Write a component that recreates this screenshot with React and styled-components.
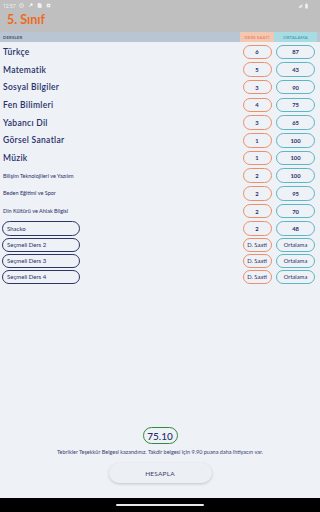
import React from "react";
import styled, { createGlobalStyle } from "styled-components";

const Global = createGlobalStyle`
  html, body { margin: 0; padding: 0; }
  body { background: #eef1f5; font-family: "Lato", "Noto Sans", sans-serif; }
`;

const Page = styled.div`
  width: 320px;
  height: 512px;
  display: flex;
  flex-direction: column;
  background: #eef1f5;
  overflow: hidden;
`;

const TopBar = styled.div`
  background: #bfbfbf;
  height: 32px;
  display: flex;
  flex-direction: column;
`;

const StatusBar = styled.div`
  height: 11px;
  display: flex;
  align-items: center;
  padding: 0 3px;
  gap: 4px;
  color: #f2f2f2;
  font-size: 5px;
  font-family: "Roboto", sans-serif;
`;

const StatusRight = styled.div`
  margin-left: auto;
  display: flex;
  align-items: center;
  gap: 2px;
  padding-right: 9px;
`;

const Title = styled.div`
  color: #ee6a1e;
  font-size: 12.5px;
  font-weight: 700;
  padding-left: 7px;
  line-height: 17px;
`;

const cols = "1fr 34px 43px 3px";

const HeaderRow = styled.div`
  height: 10px;
  background: #b9c5d3;
  display: grid;
  grid-template-columns: ${cols};
  font-size: 4.3px;
  font-weight: 700;
  align-items: stretch;
`;

const HeaderCell = styled.div`
  display: flex;
  align-items: center;
  justify-content: ${(p) => (p.$center ? "center" : "flex-start")};
  padding-left: ${(p) => (p.$center ? "0" : "3px")};
  background: ${(p) => p.$bg || "transparent"};
  color: ${(p) => p.$color || "#4a5570"};
  letter-spacing: 0.15px;
`;

const List = styled.div`
  padding-top: 1px;
  display: flex;
  flex-direction: column;
`;

const Row = styled.div`
  height: ${(p) => p.$h}px;
  display: grid;
  grid-template-columns: ${cols};
  align-items: center;
`;

const Lesson = styled.div`
  padding-left: 3px;
  color: #27306a;
  font-size: ${(p) => (p.$small ? "5.5px" : "8.5px")};
  font-weight: ${(p) => (p.$small ? 400 : 600)};
  letter-spacing: ${(p) => (p.$small ? "0" : "0.3px")};
  white-space: nowrap;
`;

const LessonBox = styled.div`
  margin-left: 2px;
  width: 78px;
  height: 14.5px;
  box-sizing: border-box;
  border: 1px solid #2d3566;
  border-radius: 8px;
  display: flex;
  align-items: center;
  padding-left: 4px;
  color: #27306a;
  font-size: 6px;
  white-space: nowrap;
`;

const PillCell = styled.div`
  display: flex;
  justify-content: center;
`;

const Pill = styled.div`
  width: ${(p) => p.$w}px;
  height: 14.5px;
  box-sizing: border-box;
  border: 1px solid ${(p) => p.$border};
  border-radius: 8px;
  display: flex;
  align-items: center;
  justify-content: center;
  color: #27306a;
  font-size: 5.8px;
  font-weight: ${(p) => (p.$bold ? 700 : 400)};
  background: #eef1f5;
`;

const Spacer = styled.div`
  flex: 1;
`;

const Footer = styled.div`
  display: flex;
  flex-direction: column;
  align-items: center;
  padding-bottom: 15px;
`;

const Score = styled.div`
  width: 35px;
  height: 17px;
  box-sizing: border-box;
  border: 1.3px solid #2e8a3c;
  border-radius: 9px;
  display: flex;
  align-items: center;
  justify-content: center;
  color: #27306a;
  font-size: 10px;
  font-weight: 500;
`;

const Message = styled.div`
  margin-top: 5px;
  color: #3a4270;
  font-size: 5.5px;
  white-space: nowrap;
`;

const Button = styled.button`
  margin-top: 8px;
  width: 103px;
  height: 20px;
  border: none;
  border-radius: 10px;
  background: #eceff3;
  box-shadow: 0 1px 3px rgba(0, 0, 0, 0.18);
  color: #3a4270;
  font-family: "Lato", sans-serif;
  font-size: 6.5px;
  letter-spacing: 0.2px;
`;

const NavBar = styled.div`
  height: 14px;
  background: #000;
  display: flex;
  align-items: center;
  justify-content: center;
`;

const HomeLine = styled.div`
  width: 88px;
  height: 1.5px;
  border-radius: 1px;
  background: #e8e8e8;
`;

const Icon = ({ children, w = 5 }) => (
  <svg width={w} height="5" viewBox="0 0 10 10" fill="none" stroke="#f2f2f2" strokeWidth="1.4">
    {children}
  </svg>
);

const subjects = [
  { name: "Türkçe", ds: "6", avg: "87" },
  { name: "Matematik", ds: "5", avg: "43" },
  { name: "Sosyal Bilgiler", ds: "3", avg: "90" },
  { name: "Fen Bilimleri", ds: "4", avg: "75" },
  { name: "Yabancı Dil", ds: "3", avg: "65" },
  { name: "Görsel Sanatlar", ds: "1", avg: "100" },
  { name: "Müzik", ds: "1", avg: "100" },
  { name: "Bilişim Teknolojileri ve Yazılım", ds: "2", avg: "100", small: true },
  { name: "Beden Eğitimi ve Spor", ds: "2", avg: "95", small: true },
  { name: "Din Kültürü ve Ahlak Bilgisi", ds: "2", avg: "70", small: true },
  { name: "Shacko", ds: "2", avg: "48", box: true, h: 17 },
  { name: "Seçmeli Ders 2", ds: "D. Saati", avg: "Ortalama", box: true, h: 16, ph: true },
  { name: "Seçmeli Ders 3", ds: "D. Saati", avg: "Ortalama", box: true, h: 16, ph: true },
  { name: "Seçmeli Ders 4", ds: "D. Saati", avg: "Ortalama", box: true, h: 16, ph: true },
];

export default function App() {
  return (
    <Page>
      <Global />
      <TopBar>
        <StatusBar>
          <span>12:57</span>
          <Icon>
            <circle cx="5" cy="5" r="4" />
            <path d="M5 3v2.5l1.5 1" />
          </Icon>
          <Icon>
            <circle cx="7" cy="3" r="2" fill="#f2f2f2" />
            <path d="M6 4L2 8M3 7l1 1" />
          </Icon>
          <Icon>
            <path d="M2 1h4.5L8.5 3v6H2z" fill="#f2f2f2" />
          </Icon>
          <Icon>
            <rect x="1.5" y="1.5" width="7" height="7" fill="#f2f2f2" stroke="none" />
            <path d="M3.5 3.5l3 3M6.5 3.5l-3 3" stroke="#bfbfbf" strokeWidth="1" />
          </Icon>
          <StatusRight>
            <svg width="5" height="5" viewBox="0 0 10 10">
              <path d="M9 1v8H1z" fill="#f2f2f2" opacity="0.6" />
              <path d="M6 4v5H1z" fill="#f2f2f2" />
            </svg>
            <svg width="3" height="6" viewBox="0 0 6 10">
              <rect x="0.5" y="1" width="5" height="9" rx="0.6" fill="#f2f2f2" />
              <rect x="2" y="0" width="2" height="1.2" fill="#f2f2f2" />
            </svg>
          </StatusRight>
        </StatusBar>
        <Title>5. Sınıf</Title>
      </TopBar>
      <HeaderRow>
        <HeaderCell>DERSLER</HeaderCell>
        <HeaderCell $center $bg="#f2c8b3" $color="#ee8a66">DERS SAATİ</HeaderCell>
        <HeaderCell $center $bg="#a8dce2" $color="#46a6b8">ORTALAMA</HeaderCell>
        <HeaderCell />
      </HeaderRow>
      <List>
        {subjects.map((s) => (
          <Row key={s.name} $h={s.h || 17.7}>
            {s.box ? (
              <LessonBox>{s.name}</LessonBox>
            ) : (
              <Lesson $small={s.small}>{s.name}</Lesson>
            )}
            <PillCell>
              <Pill $w={29} $border="#ef8e6a" $bold={!s.ph}>{s.ds}</Pill>
            </PillCell>
            <PillCell>
              <Pill $w={39} $border="#5bb6c6" $bold={!s.ph}>{s.avg}</Pill>
            </PillCell>
            <div />
          </Row>
        ))}
      </List>
      <Spacer />
      <Footer>
        <Score>75.10</Score>
        <Message>
          Tebrikler Teşekkür Belgesi kazandınız. Takdir belgesi için 9.90 puana daha ihtiyacın var.
        </Message>
        <Button>HESAPLA</Button>
      </Footer>
      <NavBar>
        <HomeLine />
      </NavBar>
    </Page>
  );
}
